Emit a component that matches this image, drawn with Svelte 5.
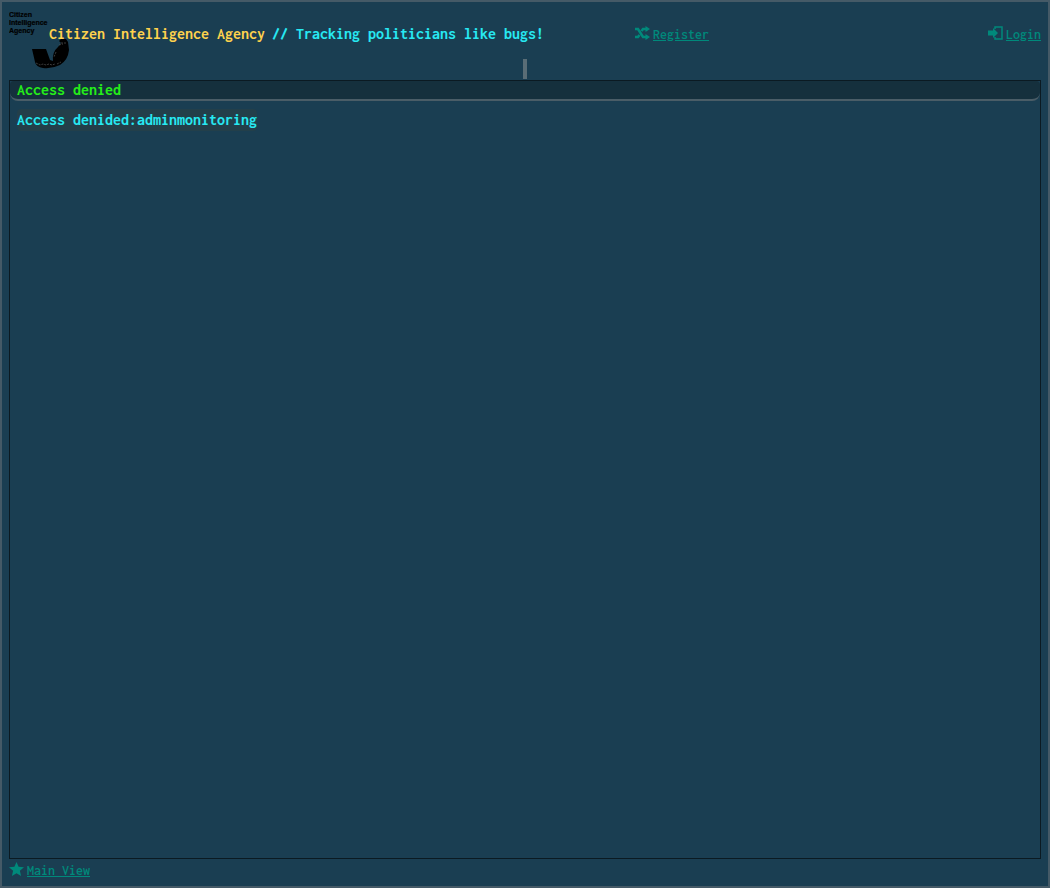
<script>
  const brand = 'Citizen Intelligence Agency';
  const slogan = '// Tracking politicians like bugs!';
</script>

<div class="page">
  <header>
    <svg class="logo" viewBox="0 0 60 60" aria-hidden="true">
      <text x="0" y="8">Citizen</text>
      <text x="0" y="16">Intelligence</text>
      <text x="0" y="24">Agency</text>
      <path d="M23 40H37L41 51L44 52Q43 43 49 38L52 34L50 32L52 30H57L59 33L60 41Q59 51 51 56Q43 60 34 59Q27 58 26 53Z" />
      <path class="detail" d="M52 34h5M50 36l4-1M47 43l-2 5M27 54l4 2 3-1 3 1 3-1 3 1 3-1M48 55l4-2" />
    </svg>
    <h1><span class="brand">{brand}</span><span>{slogan}</span></h1>
    <nav>
      <a href="#register">
        <svg class="icon" viewBox="0 0 15 14" aria-hidden="true">
          <path class="line" d="M0 3H3L8 11H11M0 11H3L4.5 9M6.5 5L8 3H11" />
          <path d="M10.500 0L15 3L10.500 6ZM10.500 8L15 11L10.500 14Z" />
        </svg><span>Register</span>
      </a>
      <a href="#login">
        <svg class="icon" viewBox="0 0 15 14" aria-hidden="true">
          <path d="M0 4.500H5V2L10 7L5 12V9.500H0Z" />
          <path class="frame" d="M7 3V1H14V13H7V11" />
        </svg><span>Login</span>
      </a>
    </nav>
  </header>
  <div class="splitter"><i></i></div>
  <main>
    <h2>Access denied</h2>
    <p><span>Access denided:adminmonitoring</span></p>
  </main>
  <footer>
    <a href="#main">
      <svg class="icon" viewBox="0 0 15 14" aria-hidden="true">
        <path d="M7.500 0L9.600 4.800L15 5.200L10.900 8.800L12.100 14L7.500 11.300L2.900 14L4.100 8.800L0 5.200L5.400 4.800Z" />
      </svg><span>Main View</span>
    </a>
  </footer>
</div>

<style>
  :global(body) {
    margin: 0;
    background: #1a3e52;
  }
  .page {
    box-sizing: border-box;
    min-height: 100vh;
    display: flex;
    flex-direction: column;
    padding: 7px;
    border: 2px solid #455a67;
    background: #1a3e52;
    color: #27e9f2;
    font-family: Inconsolata, "DejaVu Sans Mono", monospace;
    font-size: 16px;
  }
  header {
    position: relative;
    display: grid;
    grid-template-columns: 626fr 406fr;
    align-items: center;
    height: 50px;
  }
  .logo {
    position: absolute;
    left: 0;
    top: 0;
    width: 60px;
    height: 60px;
    fill: #000;
  }
  .logo text {
    font: bold 7px "Liberation Sans", sans-serif;
    stroke: #000;
    stroke-width: 0.2;
  }
  .detail {
    fill: none;
    stroke: #777;
    stroke-width: 0.5;
    stroke-dasharray: 2 1;
  }
  h1, h2, p {
    margin: 0;
    font-size: 16px;
    line-height: 20px;
    font-weight: 700;
  }
  h1 {
    position: relative;
    display: flex;
    gap: 7px;
    padding-left: 40px;
    white-space: nowrap;
  }
  .brand {
    color: #ffd24d;
  }
  nav {
    display: flex;
    justify-content: space-between;
  }
  a {
    display: inline-flex;
    align-items: center;
    gap: 3px;
    color: #00897b;
    font-size: 14px;
    line-height: 22px;
    font-weight: 600;
    text-decoration: none;
  }
  a span {
    padding-top: 1px;
    text-decoration: underline;
  }
  .icon {
    width: 15px;
    height: 14px;
    margin-bottom: 3px;
    fill: #00897b;
  }
  .line, .frame {
    fill: none;
    stroke: #00897b;
    stroke-width: 2.5;
  }
  .frame {
    stroke-width: 1.5;
  }
  .splitter {
    display: flex;
    justify-content: center;
    height: 21px;
  }
  .splitter i {
    width: 4px;
    height: 20px;
    background: #5a6d76;
  }
  main {
    flex: 1;
    border: 1px solid #0b1a22;
  }
  h2 {
    padding-left: 7px;
    line-height: 18px;
    color: #25ee19;
    background: #15303d;
    border-bottom: 2px solid #4a5d67;
    border-radius: 4px 4px 8px 8px;
  }
  p {
    padding: 8px 7px;
    line-height: 22px;
  }
  p span {
    display: inline-block;
    background: #233f4a;
    border-radius: 4px;
  }
  footer {
    height: 20px;
    display: flex;
    align-items: flex-start;
  }
</style>
